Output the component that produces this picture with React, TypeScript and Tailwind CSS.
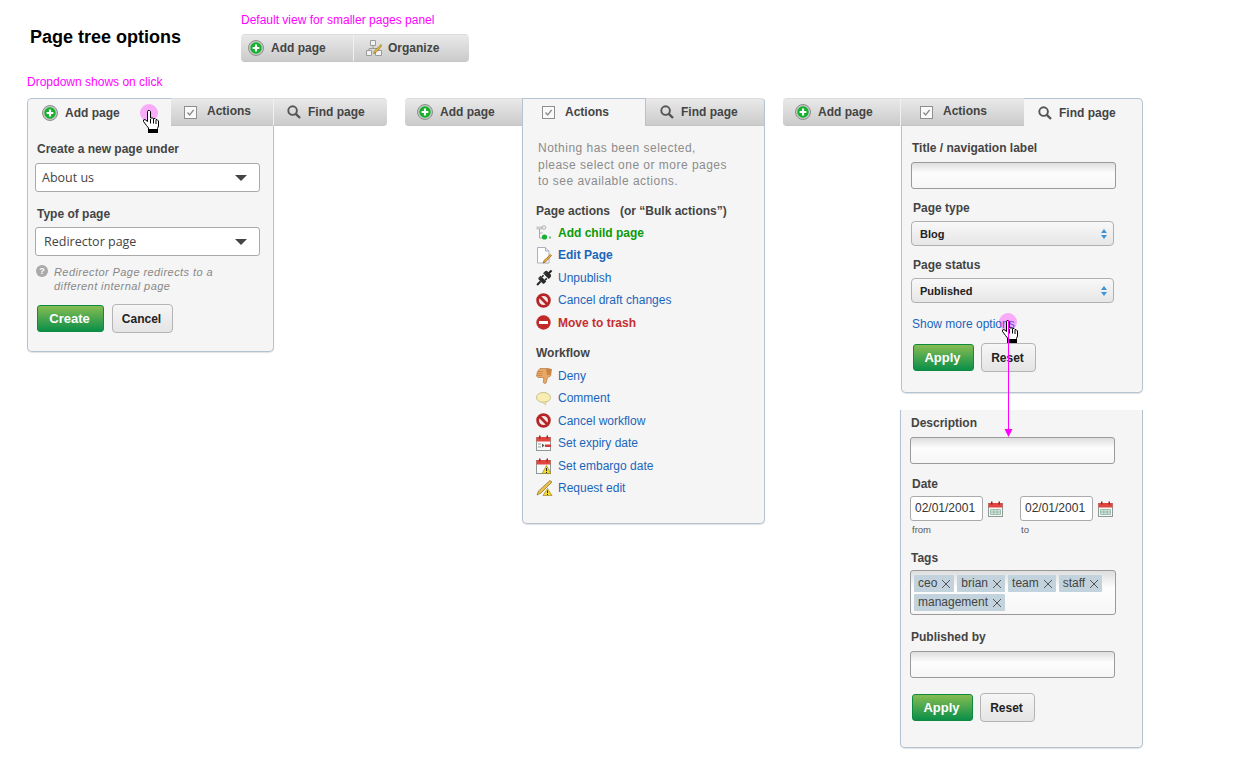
import type { ReactNode } from 'react'

const labelCls = 'text-[12px] leading-[14px] font-bold text-[#444]'
const linkCls = 'text-[12px] leading-[14px] text-[#1a66bb]'
const inputCls =
  'h-[27px] rounded-[3px] border border-[#9a9a9a] bg-[linear-gradient(#dedede,#fdfdfd_40%,#f6f6f6)]'

function PlusIcon() {
  return (
    <svg width="16" height="16" viewBox="0 0 16 16" className="shrink-0">
      <circle cx="8" cy="8" r="7.5" fill="#c4c8c4" stroke="#8b8f8b" />
      <circle cx="8" cy="8" r="5.7" fill="#14b02c" />
      <path d="M8 4.600v6.800M4.600 8h6.800" stroke="#fff" strokeWidth="2.200" />
    </svg>
  )
}

function CheckIcon() {
  return (
    <svg width="13" height="13" viewBox="0 0 13 13" className="shrink-0">
      <rect x="0.500" y="0.500" width="12" height="12" fill="#fafafa" stroke="#8e8e8e" />
      <path d="M3.500 6.500l2.200 2.400 4-5" fill="none" stroke="#8a8a8a" strokeWidth="1.400" />
    </svg>
  )
}

function SearchIcon() {
  return (
    <svg width="14" height="14" viewBox="0 0 14 14" className="shrink-0">
      <circle cx="5.600" cy="5.600" r="4.300" fill="none" stroke="#555" strokeWidth="1.900" />
      <path d="M8.800 8.800l4.200 4.200" stroke="#555" strokeWidth="2.400" />
    </svg>
  )
}

function OrganizeIcon() {
  return (
    <svg width="16" height="16" viewBox="0 0 16 16" className="shrink-0">
      <path d="M4.500.5h5v5h-5zM.5 10.500h5v5h-5zM9.500 10.500h6v5h-6z" fill="#f3f3f3" stroke="#9a9a9a" />
      <path d="M7 5.500v3M3 10.500V8.500h9v2" fill="none" stroke="#9a9a9a" />
      <path d="M15 4.500l1 1-6 7-2.400 1 .8-2.600z" fill="#e8b83a" stroke="#8a6a20" strokeWidth="0.600" />
    </svg>
  )
}

function ChildIcon() {
  return (
    <svg width="16" height="16" viewBox="0 0 16 16" className="shrink-0">
      <rect x="1" y="2" width="5" height="2" fill="#ddd" stroke="#aaa" strokeWidth="0.600" />
      <circle cx="8" cy="2.500" r="1.800" fill="#eee" stroke="#999" strokeWidth="0.700" />
      <path d="M3.500 4v9h3M3.500 8h3" fill="none" stroke="#aaa" />
      <circle cx="8.500" cy="12" r="2.600" fill="#16b030" />
      <path d="M14 11.500v2" stroke="#16a030" strokeWidth="1.200" />
    </svg>
  )
}

function PageIcon() {
  return (
    <svg width="16" height="17" viewBox="0 0 16 17" className="shrink-0">
      <path d="M1.500.5h8l3.500 3.500v12h-11.500z" fill="#fdfdfd" stroke="#a9b2bc" />
      <path d="M9.500.5v3.500h3.500" fill="#dfe6ee" stroke="#a9b2bc" />
      <path d="M14.500 7.500l1 1-6 6.500-2.300 1 .8-2.500z" fill="#eeb330" stroke="#8a5a20" strokeWidth="0.700" />
    </svg>
  )
}

function PlugIcon() {
  return (
    <svg width="17" height="17" viewBox="0 0 17 17" className="shrink-0">
      <g transform="rotate(-45 8.500 8.500)">
        <rect x="-2" y="7.500" width="5" height="2" fill="#222" />
        <path d="M3 5.500a1.500 1.500 0 0 1 1.500-1h2.500v8H4.500A1.500 1.500 0 0 1 3 11.500z" fill="#2a2a2a" />
        <path d="M7 5.500h2.500v1.500H7zM7 10h2.500v1.500H7z" fill="#222" />
        <path d="M10.500 4.500h2.500a2 2 0 0 1 2 2v4a2 2 0 0 1-2 2h-2.500z" fill="#2a2a2a" />
        <rect x="14.500" y="7.500" width="4" height="2" fill="#222" />
        <path d="M4 6h2.500M11 6h2" stroke="#777" strokeWidth="0.700" />
      </g>
    </svg>
  )
}

function NoIcon() {
  return (
    <svg width="15" height="15" viewBox="0 0 15 15" className="shrink-0">
      <circle cx="7.500" cy="7.500" r="5.900" fill="#f5e8e8" stroke="#b52525" strokeWidth="2.800" />
      <path d="M3.500 3.500l8 8" stroke="#b52525" strokeWidth="2.600" />
    </svg>
  )
}

function MinusIcon() {
  return (
    <svg width="15" height="15" viewBox="0 0 15 15" className="shrink-0">
      <circle cx="7.500" cy="7.500" r="7.200" fill="#c22a2a" />
      <rect x="3" y="6" width="9" height="3" fill="#fff" />
    </svg>
  )
}

function ThumbIcon() {
  return (
    <svg width="16" height="16" viewBox="0 0 16 16" className="shrink-0">
      <path
        d="M4 .5h8l3.500 1-1 6.500-3 1.500-1.500 5.500-1.500.5-1.200-1 .5-5H2L.5 8l1-4.500z"
        fill="#eba765"
        stroke="#b07a40"
        strokeWidth="0.700"
      />
      <path d="M2 3.500h5M1.500 5.500h5M1.300 7.500h5" stroke="#c27f40" strokeWidth="0.700" />
      <path d="M10 1h4.500l.8.500-.8 5.500H11z" fill="#c98544" />
    </svg>
  )
}

function BubbleIcon() {
  return (
    <svg width="15" height="15" viewBox="0 0 15 15" className="shrink-0">
      <ellipse cx="7.500" cy="6.500" rx="7" ry="5" fill="#f8eeb4" stroke="#c9bd8a" />
      <path d="M6 11l3.500 3 .5-3.500z" fill="#f0e4a4" stroke="#c9bd8a" strokeWidth="0.600" />
    </svg>
  )
}

function WarnMark() {
  return (
    <>
      <path d="M10.500 7.500l4.500 8h-9z" fill="#f5d92a" stroke="#8a7a1a" strokeWidth="0.600" />
      <path d="M10.500 10v3M10.500 14v1" stroke="#222" />
    </>
  )
}

function CalendarIcon({ kind }: { kind: 'plain' | 'expiry' | 'warn' }) {
  return (
    <svg width="15" height="16" viewBox="0 0 15 16" className="shrink-0">
      <rect x="0.500" y="2.500" width="14" height="13" fill="#f8f8f8" stroke="#8f9a96" />
      <rect x="0.500" y="2" width="14" height="4.500" fill="#e2453f" />
      <rect x="3" y="0.500" width="1.500" height="3" fill="#8a2a28" />
      <rect x="10.500" y="0.500" width="1.500" height="3" fill="#8a2a28" />
      {kind === 'plain' && (
        <path
          d="M2.500 8.500h10v5h-10zM2.500 11h10M5.800 8.500v5M9.200 8.500v5"
          fill="#d5e6dc"
          stroke="#8fb3a2"
          strokeWidth="0.800"
        />
      )}
      {kind === 'expiry' && (
        <>
          <path d="M2 9h3M2 12h3" stroke="#9a9a9a" />
          <path d="M6 8.500l2.500 2-2.500 2z" fill="#555" />
          <rect x="9" y="9.500" width="6" height="2.500" fill="#d23a3a" />
        </>
      )}
      {kind === 'warn' && <WarnMark />}
    </svg>
  )
}

function RequestIcon() {
  return (
    <svg width="17" height="16" viewBox="0 0 17 16" className="shrink-0">
      <path d="M14 .5l2 1.500L5 13 1 15l1.500-4z" fill="#e9c04a" stroke="#8c6d20" strokeWidth="0.700" />
      <path d="M11.500 8.500l4.500 7H7z" fill="#f5d92a" stroke="#8a7a1a" strokeWidth="0.600" />
      <path d="M11.500 10.500v2.500M11.500 14v1" stroke="#222" />
    </svg>
  )
}

function HelpIcon() {
  return (
    <span className="flex h-[12px] w-[12px] shrink-0 items-center justify-center rounded-full bg-[#aaa] text-[9px] font-bold leading-none text-white">
      ?
    </span>
  )
}

function Caret() {
  return <span className="h-0 w-0 border-x-[6px] border-t-[6px] border-x-transparent border-t-[#444]" />
}

function Hand({ className }: { className: string }) {
  return (
    <svg width="16" height="23" viewBox="0 0 16 23" className={`absolute ${className}`}>
      <path
        d="M4.500 1.500 5 .5h1.500L7.500 1.500V8H9.500L10.500 8.500H12L13 9.500H14L15.500 11V16L14.500 18.500V19.500H5.500V18L3.500 15.500L.5 11.500V10L2 9.500L4.500 11.500z"
        fill="#fff"
        stroke="#000"
      />
      <path d="M7.500 9v4.500M10.500 9v4.500M13 10v4" stroke="#000" />
      <rect x="5" y="19" width="10" height="4" fill="#000" />
    </svg>
  )
}

function Tab({
  active,
  className,
  children,
}: {
  active?: boolean
  className: string
  children: ReactNode
}) {
  const state = active
    ? 'bg-[#f5f5f5] border-t border-[#b4c3d2]'
    : 'bg-[linear-gradient(#e9e9e9,#cbcbcb)] border-y border-t-[#dcdcdc] border-b-[#c4c4c4]'
  return (
    <div className={`flex h-[28px] shrink-0 items-center font-bold text-[#444] ${state} ${className}`}>
      {children}
    </div>
  )
}

const addText = <span className="ml-[7px] text-[12px] leading-none">Add page</span>
const actionsText = <span className="ml-[10px] -mt-[2px] text-[12px] leading-none">Actions</span>
const findText = <span className="ml-[7px] text-[12px] leading-none">Find page</span>

function Panel({ className, top, children }: { className: string; top?: boolean; children: ReactNode }) {
  return (
    <div
      className={`rounded-b-[5px] border-x border-b border-[#b4c3d2] bg-[#f5f5f5] shadow-[0_1px_1px_rgba(0,0,0,0.12)] ${top ? 'mt-[17px]' : ''} ${className}`}
    >
      {children}
    </div>
  )
}

function FakeSelect({ value, className }: { value: string; className: string }) {
  return (
    <div
      className={`flex h-[29px] w-[225px] items-center justify-between rounded-[3px] border border-[#aaa] bg-white pl-[6px] pr-[12px] font-['Open_Sans',sans-serif] text-[12.500px] text-[#444] ${className}`}
    >
      <span className="pt-[1px]">{value}</span>
      <Caret />
    </div>
  )
}

function Stepper({ value, className }: { value: string; className: string }) {
  return (
    <div
      className={`flex h-[25px] w-[203px] items-center justify-between rounded-[4px] border border-[#b0b0b0] bg-[linear-gradient(#f8f8f8,#e6e6e6)] pl-[8px] pr-[6px] text-[11px] font-bold text-[#222] ${className}`}
    >
      <span className="pt-[2px]">{value}</span>
      <span className="flex flex-col gap-[2px]">
        <span className="h-0 w-0 border-x-[3px] border-b-[4px] border-x-transparent border-b-[#3d93d6]" />
        <span className="h-0 w-0 border-x-[3px] border-t-[4px] border-x-transparent border-t-[#3d93d6]" />
      </span>
    </div>
  )
}

function ApplyReset({ className }: { className: string }) {
  return (
    <div className={`flex items-center gap-[7px] ${className}`}>
      <button className="h-[27px] w-[61px] rounded-[3px] border border-[#0e8a3e] bg-[linear-gradient(#86bc52,#0b8f49)] pr-[2px] text-[13px] font-bold text-white">
        Apply
      </button>
      <button className="h-[29px] w-[55px] rounded-[4px] border border-[#b4b4b4] bg-[linear-gradient(#f6f6f6,#e4e4e4)] pr-[2px] text-[12px] font-bold text-[#222]">
        Reset
      </button>
    </div>
  )
}

function ActionRow({
  icon,
  className,
  children,
}: {
  icon: ReactNode
  className?: string
  children: ReactNode
}) {
  return (
    <div className="flex h-[22.500px] items-center">
      <span className="flex w-[22px] shrink-0">{icon}</span>
      <span className={className ?? linkCls}>{children}</span>
    </div>
  )
}

function Tag({ children }: { children: ReactNode }) {
  return (
    <span className="flex h-[17px] items-center gap-[4px] rounded-[1px] bg-[#c3d3dd] pb-[2px] pl-[4px] pr-[3px] text-[12px] text-[#444]">
      {children}
      <svg width="10" height="10" viewBox="0 0 10 10" className="mt-[2px]">
        <path d="M1 1l8 8M9 1l-8 8" stroke="#555" strokeWidth="1" />
      </svg>
    </span>
  )
}

function DateField({ className }: { className: string }) {
  return (
    <div className={`flex items-center gap-[5px] ${className}`}>
      <div className="flex h-[25px] w-[73px] items-center rounded-[3px] border border-[#aaa] bg-white pb-[1px] pl-[4px] text-[12px] text-[#333]">
        02/01/2001
      </div>
      <CalendarIcon kind="plain" />
    </div>
  )
}

export default function App() {
  return (
    <div className="relative h-[768px] w-[1256px] overflow-hidden bg-white font-['Liberation_Sans',Arial,sans-serif]">
      {/* header */}
      <div className="flex h-[75px]">
        <h1 className="w-[241px] pl-[30px] pt-[27px] text-[18px] font-bold leading-[20px] text-black">
          Page tree options
        </h1>
        <div className="pt-[13px]">
          <p className="text-[12px] leading-[14px] text-[#ff00ff]">Default view for smaller pages panel</p>
          <div className="mt-[7px] flex w-[228px] overflow-hidden rounded-[4px]">
            <Tab className="w-[113px] border-r border-r-[#f0f0f0] pl-[7px]">
              <PlusIcon />
              {addText}
            </Tab>
            <Tab className="w-[115px] pl-[12px]">
              <OrganizeIcon />
              <span className="ml-[6px] -mt-[1px] text-[12px] leading-none">Organize</span>
            </Tab>
          </div>
        </div>
      </div>

      <p className="pl-[27px] text-[12px] leading-[14px] text-[#ff00ff]">Dropdown shows on click</p>

      <div className="mt-[9px] flex gap-[18px] pl-[27px]">
        {/* add page */}
        <div className="w-[360px]">
          <div className="flex">
            <Tab active className="w-[144px] rounded-tl-[5px] border-l border-[#b4c3d2] pl-[14px]">
              <PlusIcon />
              {addText}
            </Tab>
            <Tab className="w-[103px] border-r border-r-[#f0f0f0] pl-[13px]">
              <CheckIcon />
              {actionsText}
            </Tab>
            <Tab className="w-[113px] rounded-r-[4px] pl-[13px]">
              <SearchIcon />
              {findText}
            </Tab>
          </div>
          <Panel className="h-[226px] w-[247px] pl-[7px]">
            <p className={`${labelCls} ml-[2px] pt-[16px]`}>Create a new page under</p>
            <FakeSelect value="About us" className="mt-[7px]" />
            <p className={`${labelCls} ml-[2px] mt-[15px]`}>Type of page</p>
            <FakeSelect value="Redirector page" className="mt-[6px] pl-[8px]" />
            <div className="ml-[1px] mt-[9px] flex gap-[6px]">
              <HelpIcon />
              <p className="text-[11px] italic leading-[14px] tracking-[0.43px] text-[#888]">
                Redirector Page redirects to a
                <br />
                different internal page
              </p>
            </div>
            <div className="ml-[2px] mt-[11px] flex items-center gap-[8px]">
              <button className="h-[27px] w-[67px] rounded-[3px] border border-[#0e8a3e] bg-[linear-gradient(#86bc52,#0b8f49)] pr-[2px] text-[13px] font-bold text-white">
                Create
              </button>
              <button className="h-[29px] w-[61px] rounded-[4px] border border-[#b4b4b4] bg-[linear-gradient(#f6f6f6,#e4e4e4)] pr-[2px] text-[12px] font-bold text-[#222]">
                Cancel
              </button>
            </div>
          </Panel>
        </div>

        {/* actions */}
        <div className="w-[360px]">
          <div className="flex">
            <Tab className="w-[117px] rounded-l-[4px] pl-[12px]">
              <PlusIcon />
              {addText}
            </Tab>
            <Tab active className="w-[124px] border-x border-[#b4c3d2] pl-[19px]">
              <CheckIcon />
              {actionsText}
            </Tab>
            <Tab className="w-[119px] rounded-tr-[4px] border-r border-r-[#b4c3d2] pl-[14px]">
              <SearchIcon />
              {findText}
            </Tab>
          </div>
          <Panel className="ml-[117px] h-[398px] w-[243px] pl-[13px]">
            <p className="ml-[2px] pt-[14px] text-[12px] leading-[16.500px] tracking-[0.48px] text-[#8c8c8c]">
              Nothing has been selected,
              <br />
              please select one or more pages
              <br />
              to see available actions.
            </p>
            <p className={`${labelCls} mt-[14px] whitespace-pre`}>Page actions   (or “Bulk actions”)</p>
            <div className="mt-[4px]">
              <ActionRow icon={<ChildIcon />} className="text-[12px] font-bold text-[#0a9a0a]">
                Add child page
              </ActionRow>
              <ActionRow icon={<PageIcon />} className="text-[12px] font-bold text-[#1a66bb]">
                Edit Page
              </ActionRow>
              <ActionRow icon={<PlugIcon />}>Unpublish</ActionRow>
              <ActionRow icon={<NoIcon />}>Cancel draft changes</ActionRow>
              <ActionRow icon={<MinusIcon />} className="text-[12px] font-bold text-[#c43030]">
                Move to trash
              </ActionRow>
            </div>
            <p className={`${labelCls} mt-[12px]`}>Workflow</p>
            <div className="mt-[4.500px]">
              <ActionRow icon={<ThumbIcon />}>Deny</ActionRow>
              <ActionRow icon={<BubbleIcon />}>Comment</ActionRow>
              <ActionRow icon={<NoIcon />}>Cancel workflow</ActionRow>
              <ActionRow icon={<CalendarIcon kind="expiry" />}>Set expiry date</ActionRow>
              <ActionRow icon={<CalendarIcon kind="warn" />}>Set embargo date</ActionRow>
              <ActionRow icon={<RequestIcon />}>Request edit</ActionRow>
            </div>
          </Panel>
        </div>

        {/* find page */}
        <div className="w-[360px]">
          <div className="flex">
            <Tab className="w-[118px] rounded-l-[4px] border-r border-r-[#f0f0f0] pl-[12px]">
              <PlusIcon />
              {addText}
            </Tab>
            <Tab className="w-[123px] pl-[19px]">
              <CheckIcon />
              {actionsText}
            </Tab>
            <Tab active className="w-[119px] rounded-tr-[5px] border-r border-[#b4c3d2] pl-[14px]">
              <SearchIcon />
              {findText}
            </Tab>
          </div>
          <Panel className="ml-[118px] h-[267px] w-[242px] pl-[9px]">
            <p className={`${labelCls} ml-[1px] pt-[15px]`}>Title / navigation label</p>
            <div className={`${inputCls} mt-[7px] w-[205px]`} />
            <p className={`${labelCls} ml-[2px] mt-[12px]`}>Page type</p>
            <Stepper value="Blog" className="mt-[6px]" />
            <p className={`${labelCls} ml-[2px] mt-[12px]`}>Page status</p>
            <Stepper value="Published" className="mt-[6px]" />
            <p className={`${linkCls} ml-[1px] mt-[14px]`}>Show more options</p>
            <ApplyReset className="ml-[2px] mt-[12px]" />
          </Panel>
          <Panel top className="ml-[117px] h-[338px] w-[243px] pl-[9px]">
            <p className={`${labelCls} ml-[1px] pt-[6px]`}>Description</p>
            <div className={`${inputCls} mt-[7px] w-[205px]`} />
            <p className={`${labelCls} ml-[2px] mt-[13px]`}>Date</p>
            <div className="mt-[5px] flex">
              <DateField className="w-[110px]" />
              <DateField className="" />
            </div>
            <div className="ml-[2px] mt-[3px] flex text-[9.500px] leading-[12px] text-[#555]">
              <span className="w-[109px]">from</span>
              <span>to</span>
            </div>
            <p className={`${labelCls} ml-[1px] mt-[15px]`}>Tags</p>
            <div className="mt-[5px] flex h-[45px] w-[206px] flex-wrap content-start gap-x-[3px] gap-y-[2px] rounded-[3px] border border-[#9a9a9a] bg-[linear-gradient(#dedede,#fdfdfd_40%,#f6f6f6)] pl-[3px] pt-[4px]">
              <Tag>ceo</Tag>
              <Tag>brian</Tag>
              <Tag>team</Tag>
              <Tag>staff</Tag>
              <Tag>management</Tag>
            </div>
            <p className={`${labelCls} ml-[1px] mt-[15px]`}>Published by</p>
            <div className={`${inputCls} mt-[7px] w-[205px]`} />
            <ApplyReset className="ml-[2px] mt-[15px]" />
          </Panel>
        </div>
      </div>

      {/* click annotations */}
      <span className="absolute left-[140px] top-[104px] h-[18px] w-[18px] rounded-full bg-[#ff00ff]/30" />
      <Hand className="left-[143px] top-[110px]" />
      <span className="absolute left-[999px] top-[313px] h-[18px] w-[18px] rounded-full bg-[#ff00ff]/30" />
      <Hand className="left-[1002px] top-[320px]" />
      <svg width="10" height="118" viewBox="0 0 10 118" className="absolute left-[1004px] top-[320px]">
        <path d="M4.500 0v110" stroke="#ff00ff" strokeWidth="1" />
        <path d="M.5 109h8l-4 8z" fill="#ff00ff" />
      </svg>
    </div>
  )
}
